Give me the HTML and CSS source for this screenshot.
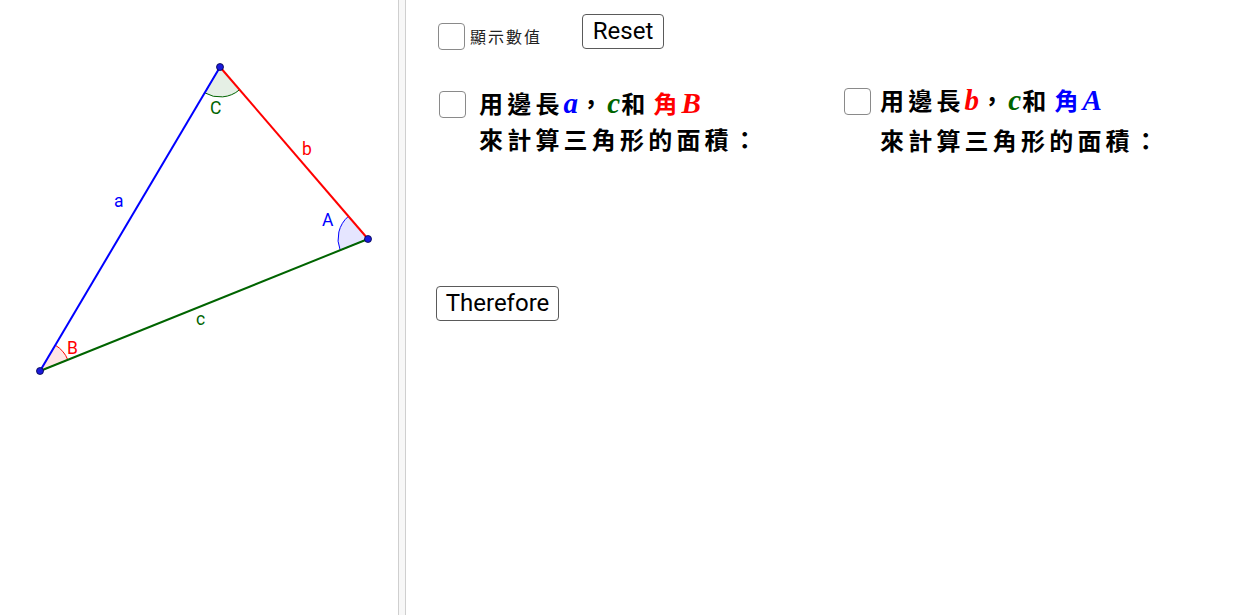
FILE: index.html
```html
<!DOCTYPE html>
<html lang="zh-Hant">
<head>
<meta charset="utf-8">
<title>三角形面積</title>
<link rel="stylesheet" href="styles.css">
</head>
<body>
<div class="app">
  <div class="graphics">
    <svg class="canvas" width="398" height="615" viewBox="0 0 398 615" xmlns="http://www.w3.org/2000/svg">
      <path d="M220 67 L204.7 92.8 A30 30 0 0 0 239.6 89.7 Z" fill="rgba(0,100,0,0.1)" stroke="#006400" stroke-width="1"/>
      <path d="M368 239 L348.4 216.3 A30 30 0 0 0 340.2 250.2 Z" fill="rgba(0,0,255,0.1)" stroke="#0000ff" stroke-width="1"/>
      <path d="M40 371 L55.3 345.2 A30 30 0 0 1 67.8 359.8 Z" fill="rgba(255,0,0,0.1)" stroke="#ff0000" stroke-width="1"/>
      <line x1="40" y1="371" x2="220" y2="67" stroke="#0000ff" stroke-width="2"/>
      <line x1="220" y1="67" x2="368" y2="239" stroke="#ff0000" stroke-width="2"/>
      <line x1="368" y1="239" x2="40" y2="371" stroke="#006400" stroke-width="2"/>
      <circle cx="220" cy="67" r="3.5" fill="#1a1adc" stroke="#000044" stroke-width="0.8"/>
      <circle cx="368" cy="239" r="3.5" fill="#1a1adc" stroke="#000044" stroke-width="0.8"/>
      <circle cx="40" cy="371" r="3.5" fill="#1a1adc" stroke="#000044" stroke-width="0.8"/>
      <g class="lbl">
        <text x="210" y="114" fill="#006400">C</text>
        <text x="302" y="155" fill="#ff0000">b</text>
        <text x="114" y="207" fill="#0000ff">a</text>
        <text x="322" y="226" fill="#0000ff">A</text>
        <text x="196" y="325" fill="#006400">c</text>
        <text x="67" y="354" fill="#ff0000">B</text>
      </g>
    </svg>
  </div>
  <div class="divider"></div>
  <div class="panel">
    <div class="row-top">
      <div class="show-values">
        <span class="box"></span>
        <span class="small-label">顯示數值</span>
      </div>
      <button class="btn btn-reset">Reset</button>
    </div>
    <div class="row-blocks">
      <div class="block block-left">
        <span class="box"></span>
        <div class="block-text">
          <div class="line">用邊長<span class="m blue">a</span>，<span class="m green">c</span>和<span class="red gap">角</span><span class="m red">B</span></div>
          <div class="line">來計算三角形的面積：</div>
        </div>
      </div>
      <div class="block block-right">
        <span class="box"></span>
        <div class="block-text">
          <div class="line">用邊長<span class="m red">b</span>，<span class="m green">c</span>和<span class="blue gap">角</span><span class="m blue">A</span></div>
          <div class="line">來計算三角形的面積：</div>
        </div>
      </div>
    </div>
    <button class="btn btn-therefore">Therefore</button>
  </div>
</div>
</body>
</html>
```
FILE: styles.css
```css
html, body {
  margin: 0;
  padding: 0;
  background: #ffffff;
}
.app {
  display: flex;
  width: 1238px;
  height: 615px;
  overflow: hidden;
  font-family: Roboto, "Liberation Sans", sans-serif;
}
.graphics {
  width: 398px;
  flex: none;
}
.canvas {
  display: block;
}
.lbl text {
  font-family: Roboto, "Liberation Sans", sans-serif;
  font-size: 17.5px;
}
.divider {
  width: 6px;
  flex: none;
  background: #f7f7f7;
  border-left: 1px solid #cfcfcf;
  border-right: 1px solid #cfcfcf;
}
.panel {
  flex: 1;
  padding-left: 32px;
  display: flex;
  flex-direction: column;
  align-items: flex-start;
}
.box {
  display: block;
  flex: none;
  width: 27px;
  height: 27px;
  box-sizing: border-box;
  border: 1px solid #8a8a8a;
  border-radius: 4px;
  background: #fff;
}
.row-top {
  display: flex;
  align-items: flex-start;
  padding-top: 14px;
}
.show-values {
  display: flex;
  align-items: center;
  width: 144px;
  margin-top: 9px;
}
.small-label {
  margin-left: 5px;
  font-family: "Noto Sans CJK TC", sans-serif;
  font-size: 16px;
  letter-spacing: 2px;
  color: #222;
  line-height: 27px;
}
.btn {
  font-family: Roboto, "Liberation Sans", sans-serif;
  font-size: 24px;
  color: #000;
  background: #fff;
  border: 1px solid #5a5a5a;
  border-radius: 4px;
  height: 35px;
  line-height: 33px;
  box-sizing: border-box;
  padding: 0;
}
.btn-reset {
  width: 82px;
}
.row-blocks {
  display: flex;
  align-items: flex-start;
  margin-top: 38px;
}
.block {
  display: flex;
  align-items: flex-start;
}
.block-left {
  width: 405px;
  margin-left: 1px;
  gap: 13px;
}
.block-left .box {
  margin-top: 3px;
}
.block-right {
  gap: 9px;
}
.block-text {
  font-family: "Noto Sans CJK TC", sans-serif;
  font-weight: 700;
  font-size: 24px;
  letter-spacing: 4.2px;
  color: #000;
}
.line {
  height: 36px;
  line-height: 30px;
  white-space: nowrap;
}
.block-right .line:first-child {
  margin-top: -3px;
  height: 40px;
}
.gap {
  margin-left: 4px;
}
.m {
  font-family: "Liberation Serif", serif;
  font-style: italic;
  font-weight: 700;
  font-size: 29px;
  letter-spacing: 1px;
}
.blue { color: #0000ff; }
.red { color: #ff0000; }
.green { color: #006400; }
.btn-therefore {
  margin-top: 125px;
  margin-left: -2px;
  width: 123px;
}
```
